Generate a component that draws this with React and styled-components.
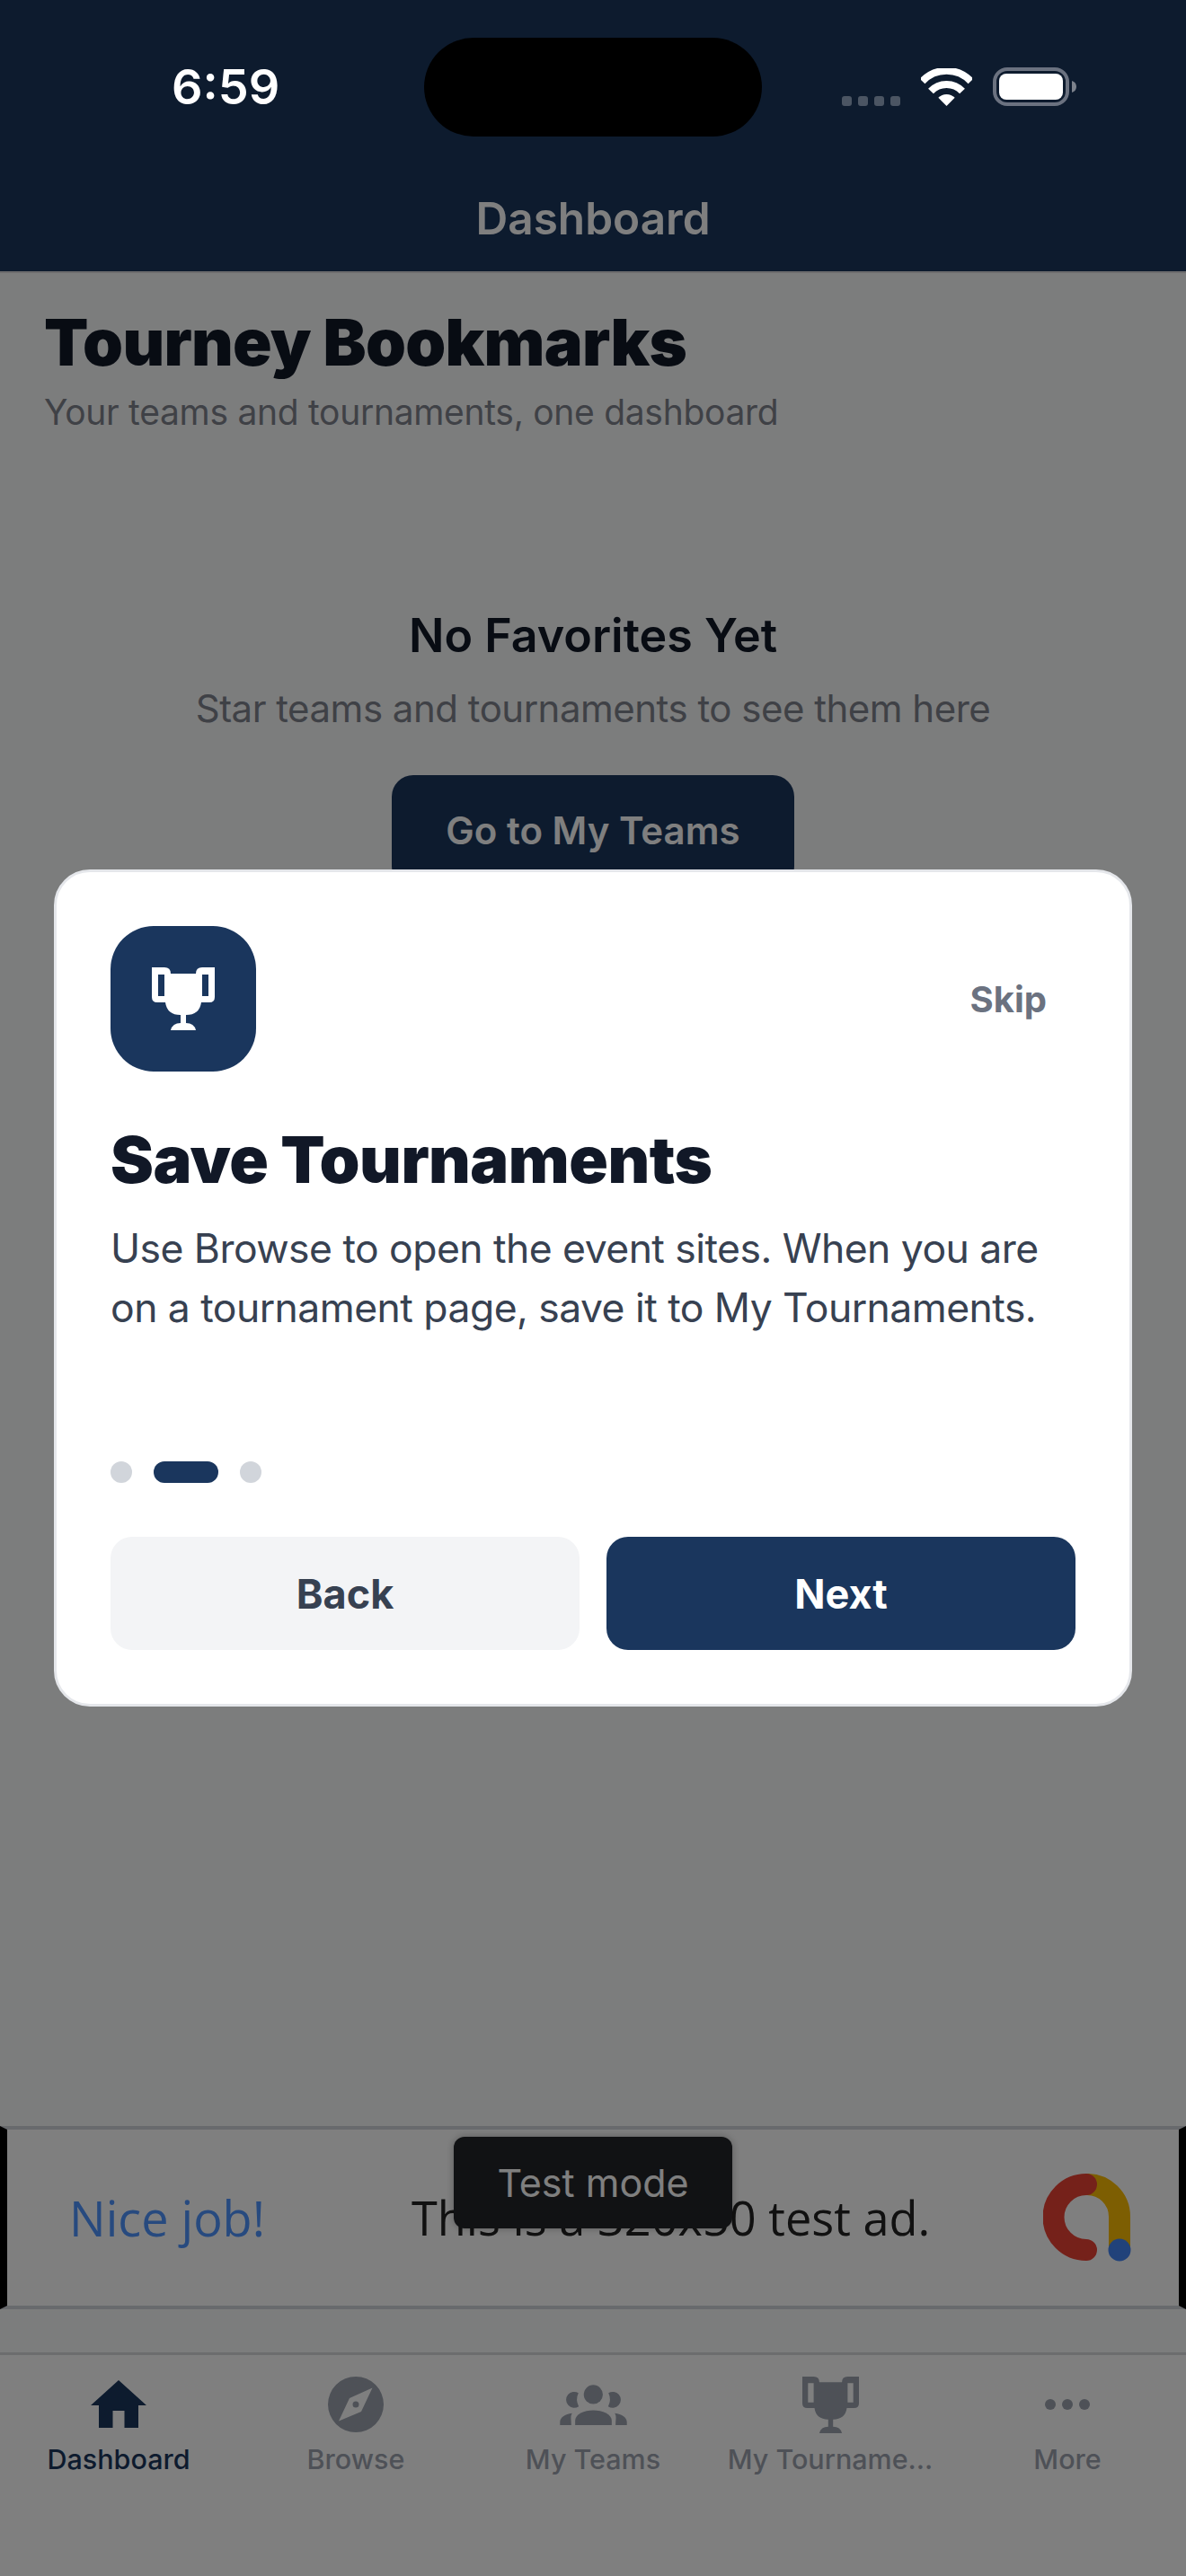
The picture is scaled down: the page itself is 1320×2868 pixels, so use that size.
import { createGlobalStyle } from 'styled-components';
import styled from 'styled-components';

const navy = '#1a365d';

const GlobalStyle = createGlobalStyle`
  html, body {
    margin: 0;
    padding: 0;
    background: #f9fafb;
  }
  * {
    box-sizing: border-box;
  }
`

const tabs = [
  { label: 'Dashboard', icon: 'home', active: true },
  { label: 'Browse', icon: 'compass' },
  { label: 'My Teams', icon: 'users' },
  { label: 'My Tourname...', icon: 'trophy' },
  { label: 'More', icon: 'more' },
];

const TrophyIcon = ({ size }) => (
  <svg width={size} height={size} viewBox="0 0 70 70" fill="currentColor">
    <path
      fillRule="evenodd"
      d="M0 0H14Q21 0 21 7H49Q49 0 56 0H70V33Q70 39 64 39H55Q53 53 38 53V62Q47 62 49 70H21Q23 62 32 62V53Q17 53 15 39H6Q0 39 0 33Z M7 8V32H14V8Z M56 8V32H63V8Z"
    />
  </svg>
);

const HomeIcon = () => (
  <svg width="62" height="54" viewBox="0 0 62 54" fill="currentColor">
    <path d="M31 0L62 28H53V53H37.500V34H24.500V53H9V28H0Z" />
  </svg>
);

const CompassIcon = () => (
  <svg width="62" height="62" viewBox="-31 -31 62 62" fill="currentColor">
    <path
      fillRule="evenodd"
      d="M-31 0A31 31 0 1 0 31 0A31 31 0 1 0 -31 0Z M18.500 -18.500L6 8L-19 18.500L-7 -7Z M-3.500 0A3.500 3.500 0 1 0 3.500 0A3.500 3.500 0 1 0 -3.500 0Z"
    />
  </svg>
);

const UsersIcon = () => (
  <svg width="75" height="45" viewBox="69 79 225 136" fill="currentColor">
    <circle cx="181" cy="112" r="32" />
    <path d="M131 107A27 27 0 1 0 132 152A50 50 0 0 1 131 107Z" />
    <path d="M232 107A27 27 0 1 1 231 152A50 50 0 0 0 232 107Z" />
    <path d="M120 215V200C120 178 150 165 181 165C212 165 243 178 243 200V215Z" />
    <path d="M69 215V205C69 190 85 178 110 175C103 185 107 195 107 215Z" />
    <path d="M294 215V205C294 190 278 178 253 175C260 185 256 195 256 215Z" />
  </svg>
);

const MoreIcon = () => (
  <svg width="50" height="12" viewBox="0 0 50 12" fill="currentColor">
    <circle cx="6" cy="6" r="6" />
    <circle cx="25" cy="6" r="6" />
    <circle cx="44" cy="6" r="6" />
  </svg>
);

const WifiIcon = () => (
  <svg width="57" height="42" viewBox="0 0 57 42">
    <path d="M1.500 14.500A37 37 0 0 1 55.500 14.500" fill="none" stroke="#fff" strokeWidth="8" />
    <path d="M11 25.500A24 24 0 0 1 46 25.500" fill="none" stroke="#fff" strokeWidth="8" />
    <path d="M28.500 42L19.300 32.800A13 13 0 0 1 37.700 32.800Z" fill="#fff" />
  </svg>
);

const BatteryIcon = () => (
  <svg width="93" height="43" viewBox="0 0 93 43">
    <rect x="2" y="2" width="81" height="39" rx="14" fill="none" stroke="#6b7280" strokeWidth="4" />
    <rect x="7" y="7" width="71" height="29" rx="8" fill="#fff" />
    <path d="M88 15C91 16 93 18 93 21.500C93 25 91 27 88 28Z" fill="#7c828c" />
  </svg>
);

const AdLogo = () => (
  <svg width="98" height="98" viewBox="0 0 98 98">
    <path d="M48 12A36 36 0 0 1 85 48V85" fill="none" stroke="#fbbc04" strokeWidth="24" />
    <path d="M48 12A36 36 0 0 0 48 85" fill="none" stroke="#ea4335" strokeWidth="24" strokeLinecap="round" />
    <circle cx="85" cy="85" r="12.500" fill="#4285f4" />
  </svg>
);

const tabIcons = {
  home: <HomeIcon />,
  compass: <CompassIcon />,
  users: <UsersIcon />,
  trophy: <TrophyIcon size={63} />,
  more: <MoreIcon />,
};

function App() {
  return (
    <Screen>
      <GlobalStyle />
      <Header>
        <HeaderTitle>Dashboard</HeaderTitle>
      </Header>

      <Content>
        <PageTitle>Tourney Bookmarks</PageTitle>
        <PageSubtitle>Your teams and tournaments, one dashboard</PageSubtitle>
        <Empty>
          <EmptyTitle>No Favorites Yet</EmptyTitle>
          <EmptyText>Star teams and tournaments to see them here</EmptyText>
          <EmptyButton>Go to My Teams</EmptyButton>
        </Empty>
      </Content>

      <Ad>
        <AdHeadline>Nice job!</AdHeadline>
        <AdText>This is a 320x50 test ad.</AdText>
        <AdLogoSlot>
          <AdLogo />
        </AdLogoSlot>
        <TestBadge>Test mode</TestBadge>
      </Ad>

      <TabBar>
        {tabs.map((tab) => (
          <Tab key={tab.label} $active={tab.active}>
            <TabIcon>{tabIcons[tab.icon]}</TabIcon>
            <TabLabel>{tab.label}</TabLabel>
          </Tab>
        ))}
      </TabBar>

      <Overlay>
        <Modal>
          <ModalTop>
            <IconTile>
              <TrophyIcon size={70} />
            </IconTile>
            <SkipButton>Skip</SkipButton>
          </ModalTop>
          <ModalTitle>Save Tournaments</ModalTitle>
          <ModalText>
            Use Browse to open the event sites. When you are on a tournament page, save it to My Tournaments.
          </ModalText>
          <Dots>
            <Dot />
            <Dot $active />
            <Dot />
          </Dots>
          <ModalButtons>
            <ModalButton>Back</ModalButton>
            <ModalButton $primary>Next</ModalButton>
          </ModalButtons>
        </Modal>
      </Overlay>

      <StatusBar>
        <Time>6:59</Time>
        <StatusIcons>
          <SignalDots>
            <SignalDot />
            <SignalDot />
            <SignalDot />
            <SignalDot />
          </SignalDots>
          <WifiIcon />
          <BatteryIcon />
        </StatusIcons>
      </StatusBar>
      <Island />
    </Screen>
  );
}

export default App;


const Screen = styled.div`
  position: relative;
  display: flex;
  flex-direction: column;
  width: 1320px;
  height: 2868px;
  overflow: hidden;
  background: #f9fafb;
  font-family: Inter, "Liberation Sans", sans-serif;
`

const Header = styled.header`
  display: flex;
  justify-content: center;
  align-items: flex-end;
  flex: none;
  height: 302px;
  padding-bottom: 30px;
  background: ${navy};
  box-shadow: 0 2px 0 rgba(0, 0, 0, 0.12);
`

const HeaderTitle = styled.h1`
  margin: 0;
  color: #fff;
  font-size: 49.500px;
  line-height: 58px;
  font-weight: 600;
`

const Content = styled.main`
  flex: 1;
  padding: 37px 49px 0;
`

const PageTitle = styled.h2`
  margin: 0;
  color: #111827;
  font-size: 72px;
  line-height: 84px;
  font-weight: 900;
  letter-spacing: -0.7px;
`

const PageSubtitle = styled.p`
  margin: 11px 0 0;
  color: #7f838d;
  font-size: 39px;
  line-height: 50px;
  letter-spacing: -0.3px;
`

const Empty = styled.section`
  display: flex;
  flex-direction: column;
  align-items: center;
  margin-top: 192px;
`

const EmptyTitle = styled.h3`
  margin: 0;
  color: #111827;
  font-size: 52px;
  line-height: 64px;
  font-weight: 600;
`

const EmptyText = styled.p`
  margin: 21px 0 0;
  color: #7f838d;
  font-size: 42px;
  line-height: 56px;
  letter-spacing: -0.5px;
`

const EmptyButton = styled.button`
  width: 448px;
  height: 126px;
  margin-top: 46px;
  padding-bottom: 4px;
  border: none;
  border-radius: 24px;
  background: ${navy};
  color: #fff;
  font-family: inherit;
  font-size: 42px;
  font-weight: 600;
`

const Ad = styled.aside`
  position: relative;
  display: flex;
  align-items: center;
  flex: none;
  height: 204px;
  margin-bottom: 48px;
  padding: 0 53px 0 69px;
  border-style: solid;
  border-width: 4px 3px;
  border-color: #d1d5db;
  border-left: 8px solid #000;
  border-right: 8px solid #000;
  background: #fff;
`

const AdHeadline = styled.span`
  color: #4f94ff;
  font-family: "Open Sans", sans-serif;
  font-size: 54px;
  line-height: 60px;
  font-weight: 500;
  filter: blur(0.6px);
`

const AdText = styled.span`
  margin-left: 163px;
  color: #222;
  font-family: "Open Sans", sans-serif;
  font-size: 52.300px;
  line-height: 60px;
  white-space: nowrap;
  filter: blur(0.6px);
`

const AdLogoSlot = styled.div`
  display: flex;
  margin-left: auto;
  filter: blur(0.6px);
`

const TestBadge = styled.div`
  position: absolute;
  top: 8px;
  left: 497px;
  display: flex;
  justify-content: center;
  align-items: center;
  width: 310px;
  height: 102px;
  border-radius: 12px;
  background: #222428;
  color: #fff;
  font-size: 43px;
  box-shadow: 0 0 8px rgba(0, 0, 0, 0.3);
`

const TabBar = styled.nav`
  display: grid;
  grid-template-columns: repeat(5, 264px);
  flex: none;
  height: 249px;
  border-top: 3px solid #d8dadd;
  background: #fff;
`

const Tab = styled.div`
  display: flex;
  flex-direction: column;
  align-items: center;
  padding-top: 24px;
  color: ${props => props.$active ? navy : '#9ca3af'};
`

const TabIcon = styled.div`
  display: flex;
  justify-content: center;
  align-items: center;
  height: 62px;
`

const TabLabel = styled.span`
  margin-top: 10px;
  font-size: 30.500px;
  line-height: 40px;
  font-weight: 500;
  white-space: nowrap;
`

const Overlay = styled.div`
  position: absolute;
  inset: 0;
  display: flex;
  justify-content: center;
  align-items: center;
  background: rgba(0, 0, 0, 0.5);
`

const Modal = styled.div`
  width: 1200px;
  height: 932px;
  padding: 60px;
  border: 3px solid #e5e7eb;
  border-radius: 40px;
  background: #fff;
`

const ModalTop = styled.div`
  display: flex;
  justify-content: space-between;
  align-items: center;
`

const IconTile = styled.div`
  display: flex;
  justify-content: center;
  align-items: center;
  width: 162px;
  height: 162px;
  border-radius: 48px;
  background: ${navy};
  color: #fff;
`

const SkipButton = styled.span`
  padding: 0 32px;
  color: #6b7280;
  font-size: 40px;
  font-weight: 700;
`

const ModalTitle = styled.h2`
  margin: 56px 0 0;
  color: #111827;
  font-size: 72px;
  line-height: 84px;
  font-weight: 900;
  letter-spacing: -0.5px;
`

const ModalText = styled.p`
  margin: 24px 0 0;
  color: #374151;
  font-size: 44.500px;
  line-height: 66px;
  letter-spacing: -0.55px;
`

const Dots = styled.div`
  display: flex;
  gap: 24px;
  margin-top: 138px;
`

const Dot = styled.span`
  width: ${props => props.$active ? '72px' : '24px'};
  height: 24px;
  border-radius: 12px;
  background: ${props => props.$active ? navy : '#d1d5db'};
`

const ModalButtons = styled.div`
  display: grid;
  grid-template-columns: 1fr 1fr;
  gap: 30px;
  margin-top: 60px;
`

const ModalButton = styled.button`
  height: 126px;
  border: none;
  border-radius: 24px;
  background: ${props => props.$primary ? navy : '#f3f4f6'};
  color: ${props => props.$primary ? '#fff' : '#374151'};
  font-family: inherit;
  font-size: 45px;
  font-weight: 700;
`

const StatusBar = styled.div`
  position: absolute;
  top: 75px;
  left: 191px;
  display: flex;
  justify-content: space-between;
  width: 1007px;
`

const Time = styled.span`
  color: #fff;
  font-size: 54px;
  line-height: 43px;
  font-weight: 600;
`

const StatusIcons = styled.div`
  display: flex;
  align-items: flex-end;
  gap: 23px;
`

const SignalDots = styled.div`
  display: flex;
  gap: 7px;
`

const SignalDot = styled.span`
  width: 11px;
  height: 11px;
  border-radius: 3px;
  background: #4b5563;
`

const Island = styled.div`
  position: absolute;
  top: 42px;
  left: 472px;
  width: 376px;
  height: 110px;
  border-radius: 55px;
  background: #000;
`
